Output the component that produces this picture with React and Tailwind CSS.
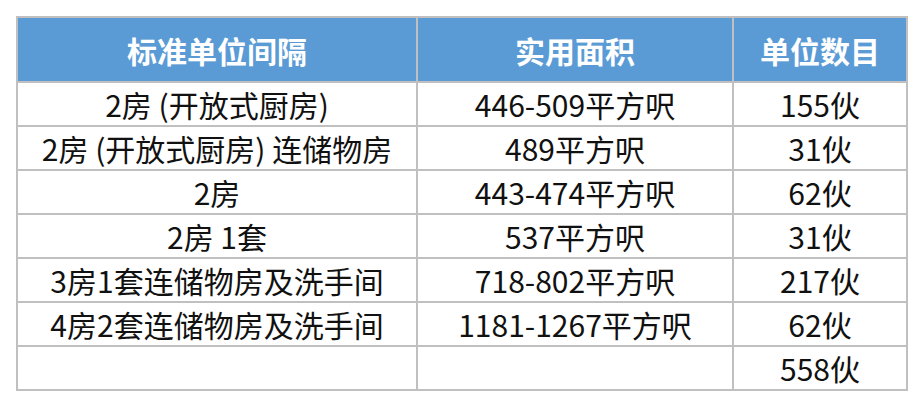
export default function App() {
  const rows = [
    ["2房 (开放式厨房)", "446-509平方呎", "155伙"],
    ["2房 (开放式厨房) 连储物房", "489平方呎", "31伙"],
    ["2房", "443-474平方呎", "62伙"],
    ["2房 1套", "537平方呎", "31伙"],
    ["3房1套连储物房及洗手间", "718-802平方呎", "217伙"],
    ["4房2套连储物房及洗手间", "1181-1267平方呎", "62伙"],
    ["", "", "558伙"],
  ];
  return (
    <div
      className="w-[922px] h-[406px] bg-white pt-[16px] pl-[16px]"
      style={{ fontFamily: '"Noto Sans CJK SC", "Noto Sans", sans-serif' }}
    >
      <table className="border-collapse border-2 border-[#c0c0c0] text-[30px] leading-none text-[#111]">
        <thead>
          <tr className="h-[65px] bg-[#5b9bd5] text-white">
            <th className="w-[400px] border-2 border-[#c0c0c0] font-bold">标准单位间隔</th>
            <th className="w-[316px] border-2 border-[#c0c0c0] font-bold">实用面积</th>
            <th className="w-[174px] border-2 border-[#c0c0c0] font-bold">单位数目</th>
          </tr>
        </thead>
        <tbody>
          {rows.map((r, i) => (
            <tr key={i} className="h-[44px]">
              {r.map((c, j) => (
                <td key={j} className="border-2 border-[#c0c0c0] text-center">
                  {c}
                </td>
              ))}
            </tr>
          ))}
        </tbody>
      </table>
    </div>
  );
}
